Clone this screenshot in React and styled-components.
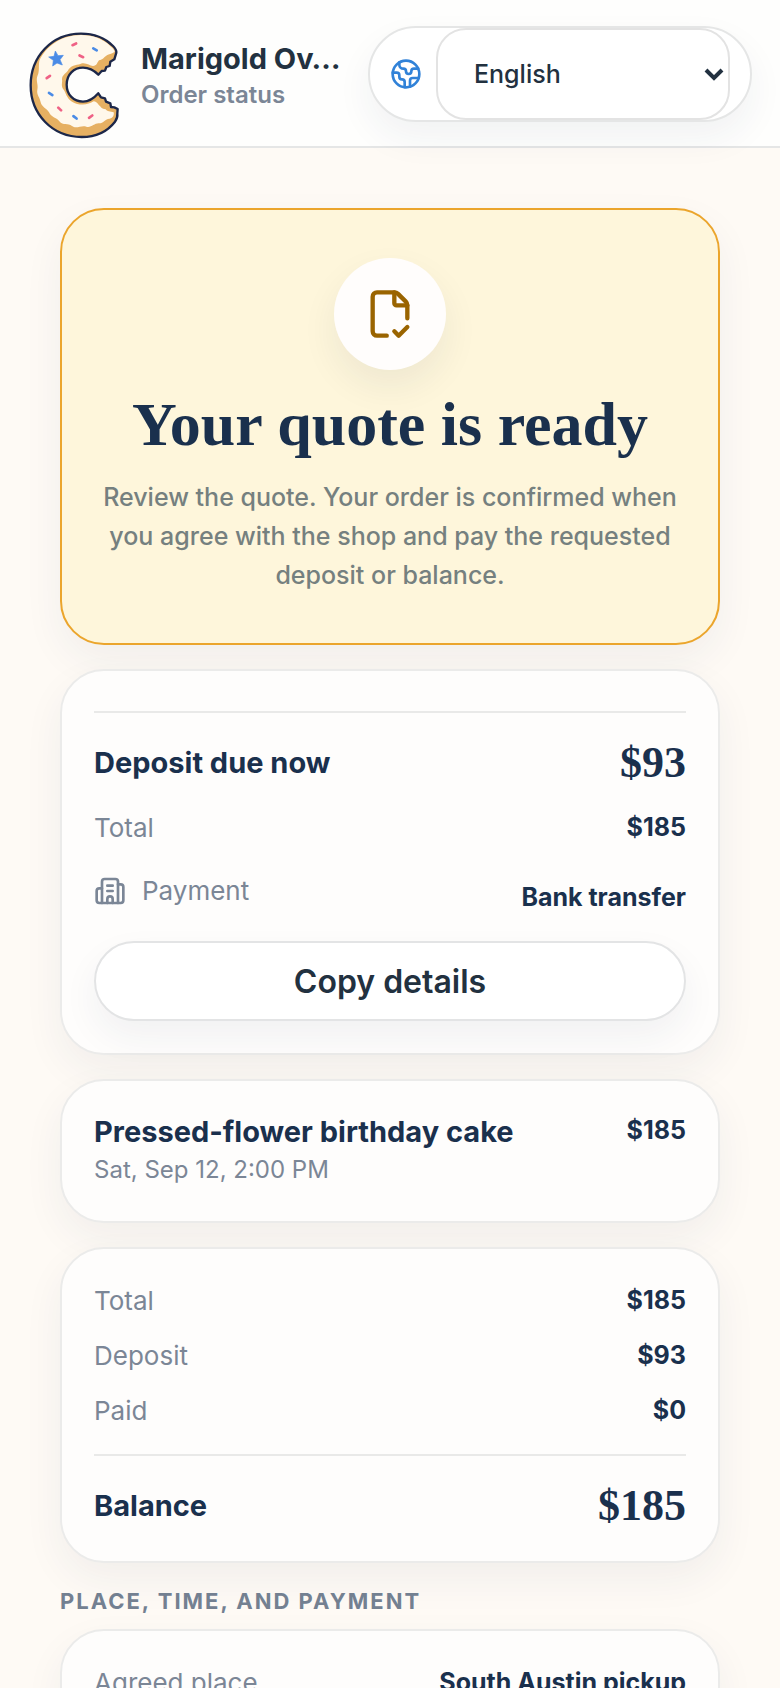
import styled, { createGlobalStyle } from 'styled-components';
import { Building2, Earth, FileCheckCorner } from 'lucide-react';

const GlobalStyle = createGlobalStyle`
  * {
    box-sizing: border-box;
  }
  body {
    margin: 0;
    background: #fefaf5;
    color: #1a304d;
    font-family: Inter, 'Liberation Sans', sans-serif;
  }
  h1, h2, p, dl, dd {
    margin: 0;
  }
`;

const Header = styled.header`
  display: flex;
  align-items: center;
  justify-content: space-between;
  padding: 26px 28px 24px 27px;
  border-bottom: 2px solid #e5e6e6;
  background: #fefefd;
`;

const Brand = styled.a`
  display: flex;
  align-items: center;
  gap: 20px;
  color: #223140;
  text-decoration: none;
  white-space: nowrap;
`;

const Logo = styled.svg`
  flex: none;
  width: 94px;
  height: 110px;
  margin: 4px 0 -18px;
`;

const BrandText = styled.span`
  padding-top: 4px;
`;

const BrandName = styled.span`
  display: block;
  font-size: 29px;
  font-weight: 700;
  line-height: 38px;
`;

const BrandNote = styled.span`
  display: block;
  color: #7b8696;
  font-size: 24px;
  font-weight: 600;
  line-height: 34px;
`;

const Language = styled.label`
  display: flex;
  align-items: center;
  gap: 14px;
  flex: 0 1 384px;
  padding: 0 20px;
  border: 2px solid #e5e6e6;
  border-radius: 48px;
  background: #fff;
  box-shadow: 0 16px 36px rgba(26, 48, 77, 0.06);
  color: #3182d8;
`;

const SelectBox = styled.span`
  position: relative;
  flex: 1;
`;

const Select = styled.select`
  appearance: none;
  display: block;
  width: 100%;
  height: 92px;
  padding: 0 36px;
  border: 2px solid #e3e3e3;
  border-radius: 30px;
  background: #fff;
  color: #223140;
  font: 500 25px Inter, 'Liberation Sans', sans-serif;
`;

const Chevron = styled.svg`
  position: absolute;
  top: 38px;
  right: 6px;
  width: 20px;
  height: 16px;
  pointer-events: none;
`;

const Main = styled.main`
  display: flex;
  flex-direction: column;
  gap: 24px;
  padding: 60px;
`;

const Card = styled.section`
  padding: 32px;
  border: 2px solid #ebebea;
  border-radius: 44px;
  background: #fefdfc;
  box-shadow: 0 16px 40px rgba(26, 48, 77, 0.06);
`;

const StatusCard = styled(Card)`
  display: flex;
  flex-direction: column;
  align-items: center;
  padding: 48px 32px;
  border-color: #eba52c;
  background: #fef6db;
  text-align: center;
`;

const StatusIcon = styled.span`
  display: grid;
  place-items: center;
  width: 112px;
  height: 112px;
  border-radius: 50%;
  background: #fffdfc;
  box-shadow: 0 16px 36px rgba(26, 48, 77, 0.07);
  color: #9a6400;
`;

const Title = styled.h1`
  margin-top: 22px;
  font-family: 'Liberation Serif', serif;
  font-size: 62px;
  font-weight: 700;
  line-height: 64px;
`;

const Lead = styled.p`
  margin-top: 22px;
  color: #75807f;
  font-size: 25px;
  font-weight: 500;
  line-height: 39px;
`;

const Rows = styled.dl`
  display: flex;
  flex-direction: column;
  gap: ${(props) => props.$gap || 16}px;
`;

const Row = styled.div`
  display: flex;
  align-items: center;
  justify-content: space-between;
  min-height: ${(props) => (props.$tall ? 56 : 39)}px;

  dt {
    line-height: ${(props) => (props.$tall ? 44 : 39)}px;
  }
`;

const Label = styled.dt`
  display: flex;
  align-items: center;
  gap: 16px;
  align-self: flex-start;
  color: #7b8696;
  font-size: 26px;
`;

const Value = styled.dd`
  font-size: 25px;
  font-weight: 700;
  line-height: 39px;
`;

const SumRow = styled(Row)`
  margin-top: 8px;
  padding-top: 27px;
  border-top: 2px solid #e9e9e8;

  dt {
    color: inherit;
    font-size: 29px;
    font-weight: 700;
    line-height: 46px;
  }
  dd {
    font-family: 'Liberation Serif', serif;
    font-size: 44px;
    line-height: 46px;
  }
`;

const CopyButton = styled.button`
  width: 100%;
  height: 80px;
  margin-top: 16px;
  border: 2px solid #e3e4e5;
  border-radius: 40px;
  background: #fff;
  box-shadow: 0 16px 36px rgba(26, 48, 77, 0.06);
  color: #223140;
  font: 600 32px Inter, 'Liberation Sans', sans-serif;
`;

const Item = styled.div`
  display: flex;
  justify-content: space-between;
`;

const ItemName = styled.h2`
  font-size: 29px;
  font-weight: 700;
  line-height: 38px;
`;

const ItemPrice = styled.span`
  font-size: 25px;
  font-weight: 700;
  line-height: 34px;
`;

const ItemDate = styled.p`
  color: #7b8696;
  font-size: 24px;
  line-height: 38px;
`;

const SectionTitle = styled.h2`
  margin-bottom: -10px;
  color: #738091;
  font-size: 22px;
  font-weight: 700;
  letter-spacing: 2px;
  line-height: 28px;
  text-transform: uppercase;
`;

const totals = [
  { label: 'Total', value: '$185' },
  { label: 'Deposit', value: '$93' },
  { label: 'Paid', value: '$0' },
];

const sprinkles = [
  { x: 164, y: 75, angle: -25, color: '#ef6185' },
  { x: 226, y: 90, angle: 30, color: '#4a8be6' },
  { x: 185, y: 111, angle: 25, color: '#ef6185' },
  { x: 86, y: 173, angle: -35, color: '#ef6185' },
  { x: 93, y: 224, angle: 32, color: '#4a8be6' },
  { x: 120, y: 269, angle: 45, color: '#ef6185' },
  { x: 166, y: 294, angle: 38, color: '#4a8be6' },
  { x: 213, y: 292, angle: -35, color: '#ef6185' },
];

const DonutLogo = () => (
  <Logo viewBox="22 32 282 330" aria-hidden="true">
    <path
      d="M290 100C291 92 286 86 280 80C254 54 220 43 184 43C96 43 33 112 33 198C33 285 98 353 186 353C226 353 262 338 286 307C292 299 294 291 293 282L294 269L284 264L274 263L272 252L259 247L256 237L244 234L236 222C222 238 210 247 190 247C162 247 141 226 141 196C141 166 162 145 190 145C208 145 222 152 236 166L246 155L256 154L260 143L270 140L272 127L284 120Z"
      fill="#e6b062"
      stroke="#1c2749"
      strokeWidth="7"
      strokeLinejoin="round"
    />
    <path
      d="M285 97C284 91 279 86 274 82C250 58 219 47 184 47C125 47 79 81 59 124C56 142 60 154 54 168C47 184 57 196 53 211C50 227 61 234 63 249C66 264 82 267 88 279C95 295 109 293 119 306C130 321 145 310 157 320C170 330 186 316 200 322C215 326 224 311 238 312C252 312 258 297 270 298C280 296 284 287 282 279C272 276 262 277 258 270C246 270 243 261 238 258C233 249 227 247 222 246C206 258 176 259 157 247C140 237 139 220 131 210C123 199 129 190 127 180C127 166 141 163 147 150C158 135 174 139 187 132C202 130 210 139 220 140C232 140 232 130 238 123C249 122 254 112 263 107C271 103 277 104 285 97Z"
      fill="#fff8eb"
    />
    <path
      d="M107 95L115 109L131 108L121 121L128 137L112 131L99 140L101 123L87 113L103 111Z"
      fill="#4a8be6"
      stroke="#4a8be6"
      strokeWidth="2"
      strokeLinejoin="round"
    />
    {sprinkles.map((s) => (
      <rect
        key={`${s.x}-${s.y}`}
        x={s.x - 10}
        y={s.y - 4}
        width="20"
        height="8"
        rx="4"
        fill={s.color}
        transform={`rotate(${s.angle} ${s.x} ${s.y})`}
      />
    ))}
  </Logo>
);

const AmountRow = ({ label, value }) => (
  <Row>
    <Label>{label}</Label>
    <Value>{value}</Value>
  </Row>
);

const App = () => {
  return (
    <>
      <GlobalStyle />
      <Header>
        <Brand href="#">
          <DonutLogo />
          <BrandText>
            <BrandName>Marigold Ov…</BrandName>
            <BrandNote>Order status</BrandNote>
          </BrandText>
        </Brand>
        <Language htmlFor="language">
          <Earth size={32} aria-label="Language" />
          <SelectBox>
            <Select id="language" defaultValue="en">
              <option value="en">English</option>
            </Select>
            <Chevron viewBox="0 0 20 16" aria-hidden="true">
              <path d="M2 4l8 8 8-8" fill="none" stroke="#223140" strokeWidth="4" />
            </Chevron>
          </SelectBox>
        </Language>
      </Header>
      <Main>
        <StatusCard>
          <StatusIcon>
            <FileCheckCorner size={52} />
          </StatusIcon>
          <Title>Your quote is ready</Title>
          <Lead>
            Review the quote. Your order is confirmed when you agree with the shop and pay the
            requested deposit or balance.
          </Lead>
        </StatusCard>

        <Card>
          <Rows $gap={22}>
            <SumRow>
              <Label>Deposit due now</Label>
              <Value>$93</Value>
            </SumRow>
            <AmountRow label="Total" value="$185" />
            <Row $tall>
              <Label>
                <Building2 size={32} />
                Payment
              </Label>
              <Value>Bank transfer</Value>
            </Row>
          </Rows>
          <CopyButton type="button">Copy details</CopyButton>
        </Card>

        <Card>
          <Item>
            <div>
              <ItemName>Pressed-flower birthday cake</ItemName>
              <ItemDate>Sat, Sep 12, 2:00 PM</ItemDate>
            </div>
            <ItemPrice>$185</ItemPrice>
          </Item>
        </Card>

        <Card>
          <Rows>
            {totals.map((t) => (
              <AmountRow key={t.label} label={t.label} value={t.value} />
            ))}
            <SumRow>
              <Label>Balance</Label>
              <Value>$185</Value>
            </SumRow>
          </Rows>
        </Card>

        <SectionTitle>Place, time, and payment</SectionTitle>
        <Card>
          <Rows>
            <AmountRow label="Agreed place" value="South Austin pickup" />
          </Rows>
        </Card>
      </Main>
    </>
  );
};

export default App;
